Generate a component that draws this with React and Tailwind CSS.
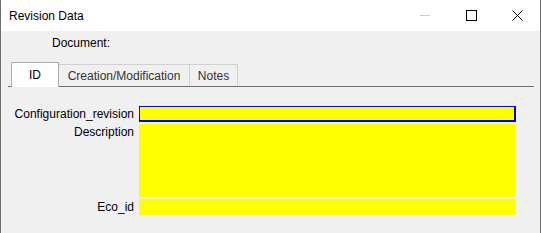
export default function App() {
  return (
    <div className="w-[541px] h-[233px] flex flex-col bg-[#f0f0f0] border-x border-[#707070] text-[12px] leading-[16px] text-black font-['Liberation_Sans',Arial,sans-serif] overflow-hidden">
      {/* Title bar */}
      <div className="h-[31px] shrink-0 bg-white flex items-center">
        <span className="pl-[8px] pt-[1px]">Revision Data</span>
        <div className="ml-auto flex items-center h-full">
          <div className="w-[46px] h-full flex items-center justify-center">
            <div className="w-[10px] h-px bg-[#cccccc]" />
          </div>
          <div className="w-[46px] h-full flex items-center justify-center">
            <div className="w-[11px] h-[11px] border border-black" />
          </div>
          <div className="w-[46px] h-full flex items-center justify-center">
            <svg width="11" height="11" viewBox="0 0 11 11">
              <path d="M0.5 0.5 L10.5 10.5 M10.5 0.5 L0.5 10.5" stroke="#000" strokeWidth="1" fill="none" />
            </svg>
          </div>
        </div>
      </div>

      {/* Document row */}
      <div className="h-[24px] pl-[51px] flex items-center">Document:</div>

      {/* Tabs */}
      <div className="mt-[7px] ml-[7px] mr-[6px] pl-[3px] flex items-end border-b border-[#6e6e6e]">
        <div className="w-[48px] h-[25px] -mb-px bg-white border-l border-t border-r border-[#acacac] flex items-center justify-center">
          ID
        </div>
        <div className="w-[131px] h-[22px] border-t border-r border-[#d0d0d0] flex items-center justify-center text-[#333]">
          Creation/Modification
        </div>
        <div className="w-[48px] h-[22px] border-t border-r border-[#d0d0d0] flex items-center justify-center text-[#333]">
          Notes
        </div>
      </div>

      {/* Form */}
      <div className="mt-[19px] grid grid-cols-[133px_377px] gap-x-[5px] gap-y-[2px]">
        <div className="text-right h-[16px]">Configuration_revision</div>
        <div className="h-[16px] bg-[#ffff00] border-t border-l border-r-2 border-b-2 border-[#0000ff]" />
        <div className="text-right h-[16px]">Description</div>
        <div className="h-[73px] bg-[#ffff00]" />
        <div className="text-right h-[16px]">Eco_id</div>
        <div className="h-[16px] bg-[#ffff00]" />
      </div>
    </div>
  );
}
